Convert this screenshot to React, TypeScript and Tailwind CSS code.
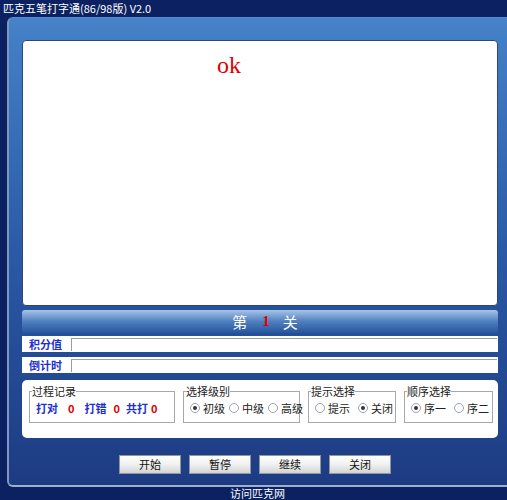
import React from "react";

const cjk = { fontFamily: '"Noto Sans CJK SC", "Noto Sans", sans-serif' };

function Radio({ checked, label }: { checked?: boolean; label: string }) {
  return (
    <span className="flex shrink-0 items-center gap-[3px] whitespace-nowrap">
      <span className="flex h-[10px] w-[10px] shrink-0 items-center justify-center rounded-full border border-[#9aa3ad] bg-white">
        {checked && <span className="h-[4px] w-[4px] rounded-full bg-[#333]" />}
      </span>
      <span>{label}</span>
    </span>
  );
}

function Group({
  title,
  width,
  children,
}: {
  title: string;
  width: string;
  children: React.ReactNode;
}) {
  return (
    <fieldset
      className={`${width} h-[38px] min-w-0 shrink-0 border border-[#a8a8a8] px-[6px] pb-[4px]`}
    >
      <legend className="ml-[-4px] px-0 text-[11px] leading-[12px] text-[#222]">
        {title}
      </legend>
      <div className="mt-[5px] flex items-center gap-[4px] whitespace-nowrap text-[11px] leading-[12px] text-[#222]">
        {children}
      </div>
    </fieldset>
  );
}

function StatRow({ label }: { label: string }) {
  return (
    <div className="flex h-[16px] items-center bg-white">
      <span className="w-[49px] pl-[7px] text-[11px] font-bold leading-none text-[#1c2fd0]">
        {label}
      </span>
      <div className="mr-[1px] h-[13px] flex-1 border-l border-t border-[#9c9c9c] bg-white" />
    </div>
  );
}

function Btn({ label }: { label: string }) {
  return (
    <button className="h-[19px] w-[62px] border border-[#8c97a6] bg-gradient-to-b from-white via-[#f0f0f0] to-[#d4d4d4] text-[11px] leading-none text-[#111]">
      {label}
    </button>
  );
}

export default function App() {
  return (
    <div
      className="relative h-[500px] w-[507px] overflow-hidden bg-[#0b2162]"
      style={cjk}
    >
      <div className="h-[17px] pl-[3px] pt-[1px] text-[11px] leading-[15px] text-white">
        匹克五笔打字通(86/98版) V2.0
      </div>

      <div className="ml-[7px] h-[470px] w-[510px] rounded-tl-[6px] rounded-bl-[6px] border-b-2 border-l-2 border-t border-b-[#9fb0cc] border-l-[#7f96c0] border-t-[#5c8ad0] bg-gradient-to-b from-[#4582c8] via-[#2a5aa6] to-[#1d3b82] pl-[13px] pt-[22px]">
        <div className="w-[476px]">
          <div className="relative h-[266px] rounded-[4px] border border-[#2a4775] bg-white">
            <span
              className="absolute left-[194px] top-[12px] text-[24px] leading-none text-[#e00000]"
              style={{ fontFamily: '"Liberation Serif", serif' }}
            >
              ok
            </span>
          </div>

          <div className="mt-[4px] flex h-[23px] items-center justify-center rounded-t-[3px] bg-gradient-to-b from-[#a8c4e6] via-[#4f7fbf] to-[#27569c] pl-[10px] text-[15px] leading-none text-white">
            <span>第</span>
            <span
              className="ml-[15px] font-bold text-[#e00000]"
              style={{ fontFamily: '"Liberation Serif", serif' }}
            >
              1
            </span>
            <span className="ml-[13px]">关</span>
          </div>

          <div className="mt-[3px] flex flex-col gap-[5px]">
            <StatRow label="积分值" />
            <StatRow label="倒计时" />
          </div>

          <div className="mt-[7px] flex h-[58px] items-start gap-[8px] rounded-[5px] bg-white pl-[7px] pt-[5px]">
            <Group title="过程记录" width="w-[146px]">
              <span className="flex items-center text-[11px] font-bold">
                <span className="text-[#1c2fd0]">打对</span>
                <span className="ml-[10px] text-[#e00000]">0</span>
                <span className="ml-[10px] text-[#1c2fd0]">打错</span>
                <span className="ml-[7px] text-[#e00000]">0</span>
                <span className="ml-[6px] text-[#1c2fd0]">共打</span>
                <span className="ml-[3px] text-[#e00000]">0</span>
              </span>
            </Group>
            <Group title="选择级别" width="w-[117px]">
              <Radio checked label="初级" />
              <Radio label="中级" />
              <Radio label="高级" />
            </Group>
            <Group title="提示选择" width="w-[88px]">
              <Radio label="提示" />
              <span className="w-[2px]" />
              <Radio checked label="关闭" />
            </Group>
            <Group title="顺序选择" width="w-[89px]">
              <Radio checked label="序一" />
              <span className="w-[4px]" />
              <Radio label="序二" />
            </Group>
          </div>

          <div className="mt-[17px] flex justify-center gap-[8px] pr-[10px]">
            <Btn label="开始" />
            <Btn label="暂停" />
            <Btn label="继续" />
            <Btn label="关闭" />
          </div>
        </div>
      </div>

      <div className="absolute left-[230px] top-[486px] text-[11px] leading-[14px] text-white">
        访问匹克网
      </div>
    </div>
  );
}
